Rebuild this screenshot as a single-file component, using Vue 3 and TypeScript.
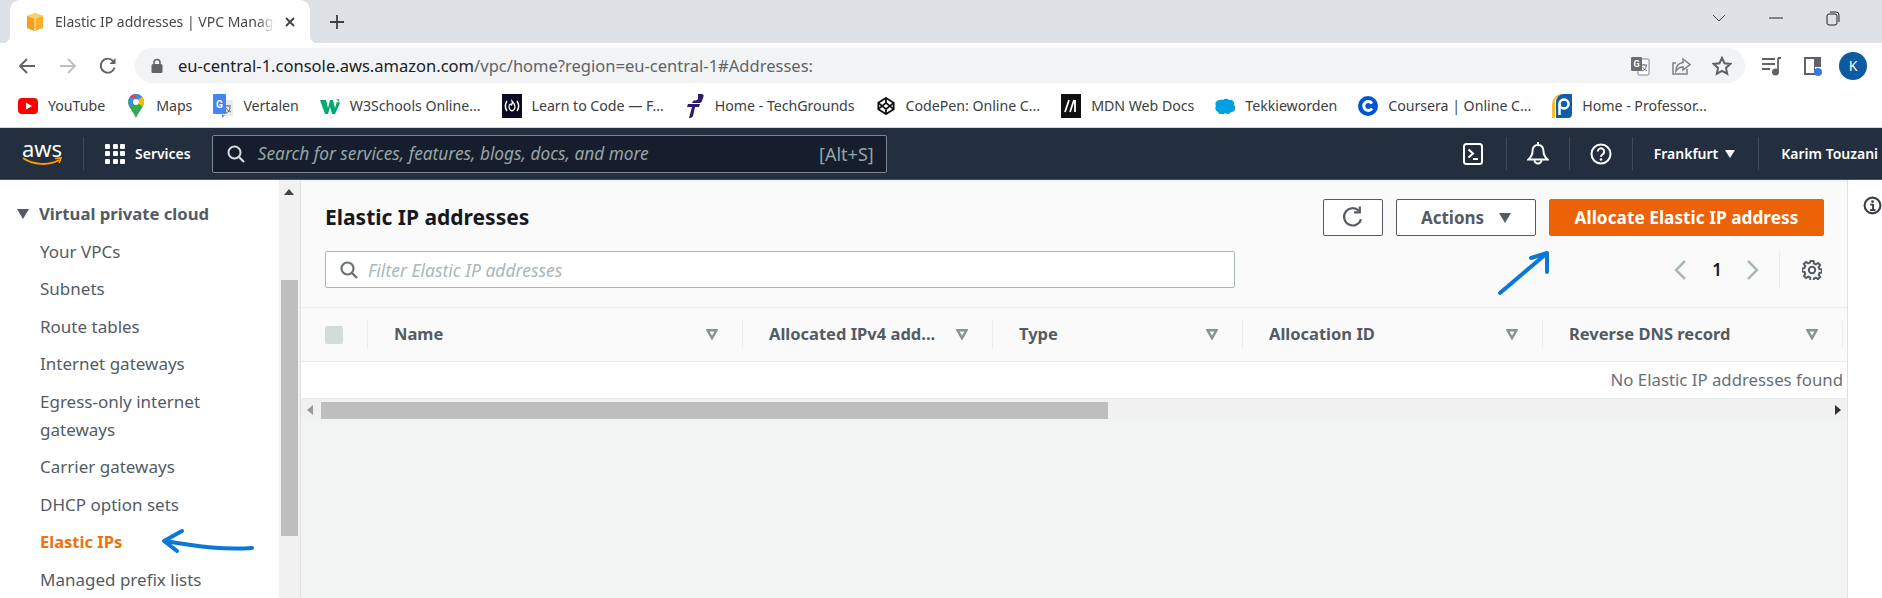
<template>
  <div class="page">
    <!-- browser chrome -->
    <div class="tabstrip">
      <div class="tab">
        <svg class="favicon" viewBox="0 0 18 18" width="18" height="18">
          <polygon points="9,0 17,3 17,15 9,18 1,15 1,3" fill="#f7b02c" />
          <polygon points="1,3 9,6 9,18 1,15" fill="#f59f1e" />
          <polygon points="9,0 17,3 9,6 1,3" fill="#fbd06f" />
          <path d="M9 6v12" stroke="#fde6ae" stroke-width="1" />
        </svg>
        <span class="tab-title">Elastic IP addresses | VPC Management Console</span>
        <svg class="tab-close" viewBox="0 0 12 12" width="12" height="12">
          <path d="M2 2l8 8M10 2l-8 8" stroke="#3c4043" stroke-width="1.8" />
        </svg>
      </div>
      <svg class="tab-plus" viewBox="0 0 16 16" width="16" height="16">
        <path d="M8 1v14M1 8h14" stroke="#3c4043" stroke-width="1.8" />
      </svg>
      <div class="window-btns">
        <svg viewBox="0 0 14 8" width="14" height="8"><path d="M1 1l6 6 6-6" fill="none" stroke="#444" /></svg>
        <svg viewBox="0 0 14 2" width="14" height="2"><path d="M0 1h14" stroke="#222" /></svg>
        <svg viewBox="0 0 14 15" width="14" height="15">
          <rect x="1" y="3" width="10" height="11" rx="2" fill="none" stroke="#222" />
          <path d="M4 1h6a3 3 0 0 1 3 3v7" fill="none" stroke="#222" />
        </svg>
      </div>
    </div>

    <div class="toolbar">
      <svg class="tool back" viewBox="0 0 18 18" width="18" height="18">
        <path d="M17 9H2M9 2L2 9l7 7" fill="none" stroke="#5f6368" stroke-width="1.9" />
      </svg>
      <svg class="tool fwd" viewBox="0 0 18 18" width="18" height="18">
        <path d="M1 9h15M9 2l7 7-7 7" fill="none" stroke="#bcc0c4" stroke-width="1.9" />
      </svg>
      <svg class="tool reload" viewBox="0 0 18 18" width="18" height="18">
        <path d="M15.5 10.5A7 7 0 1 1 14 4" fill="none" stroke="#5f6368" stroke-width="1.9" />
        <path d="M16.5 1v6h-6z" fill="#5f6368" />
      </svg>
      <div class="omnibox">
        <svg class="lock" viewBox="0 0 12 15" width="12" height="15">
          <path d="M3 6V4.5a3 3 0 0 1 6 0V6" fill="none" stroke="#5f6368" stroke-width="1.5" />
          <rect x="0.5" y="6" width="11" height="9" rx="1.5" fill="#5f6368" />
        </svg>
        <span class="url"><span class="url-host">eu-central-1.console.aws.amazon.com</span>/vpc/home?region=eu-central-1#Addresses:</span>
        <svg class="omni-icon first" viewBox="0 0 20 20" width="20" height="20">
          <rect x="8" y="3" width="11" height="16" rx="1" fill="#fff" stroke="#80868b" />
          <rect x="1" y="1" width="11" height="14" rx="1" fill="#6a6e73" />
          <text x="6.5" y="11" class="g-letter">G</text>
          <path d="M11 9h6M14 8v1M12 15c3-1 4-3 4.500-6M12.500 11c1 2 3 3 4.500 3.500" fill="none" stroke="#5f6368" />
        </svg>
        <svg class="omni-icon" viewBox="0 0 20 20" width="20" height="20">
          <path d="M5 7H2v11h14v-5" fill="none" stroke="#7d8185" stroke-width="1.5" />
          <path d="M12 3l7 5.500-7 5.500v-3c-3 0-5 1-7 4 0-5 3-8 7-8.500z" fill="none" stroke="#7d8185" stroke-width="1.5" />
        </svg>
        <svg class="omni-icon" viewBox="0 0 20 20" width="20" height="20">
          <path d="M10 1.800l2.500 5.400 5.800.7-4.300 4 1.200 5.800L10 14.800l-5.200 2.900L6 11.900l-4.300-4 5.800-.7z" fill="none" stroke="#5f6368" stroke-width="2" />
        </svg>
      </div>
      <svg class="ext media" viewBox="0 0 20 20" width="20" height="20">
        <path d="M0 3h13M0 8h13M0 13h8" stroke="#5f6368" stroke-width="1.8" />
        <path d="M16 2h3M16 2v14" stroke="#5f6368" stroke-width="1.800" />
        <circle cx="13.500" cy="16" r="3.500" fill="#5f6368" />
      </svg>
      <svg class="ext panel" viewBox="0 0 20 20" width="20" height="20">
        <path d="M1 1h17v10h-6v8H1z" fill="#5f6368" />
        <rect x="3" y="3" width="8" height="14" fill="#fff" />
        <circle cx="15" cy="16" r="4" fill="#3b78e7" />
      </svg>
      <div class="avatar">K</div>
    </div>

    <div class="bookmarks">
      <div v-for="b in bookmarks" :key="b.label" class="bookmark">
        <span class="bm-icon" v-html="b.icon"></span>
        <span>{{ b.label }}</span>
      </div>
    </div>

    <!-- aws top nav -->
    <header class="nav">
      <div class="aws-logo">
        <span class="aws-word">aws</span>
        <svg viewBox="0 0 40 10" width="40" height="10">
          <path d="M1 1c10 7 26 8 36 2" fill="none" stroke="#ff9900" stroke-width="2" />
          <path d="M33 1.500l6-.5-2 5" fill="none" stroke="#ff9900" stroke-width="1.600" />
        </svg>
      </div>
      <i class="nav-sep first"></i>
      <div class="grid-icon"><i v-for="n in 9" :key="n"></i></div>
      <span class="services">Services</span>
      <div class="nav-search">
        <svg viewBox="0 0 18 18" width="18" height="18">
          <circle cx="7.500" cy="7.500" r="6" fill="none" stroke="#d5dbdb" stroke-width="2" />
          <path d="M12 12l5 5" stroke="#d5dbdb" stroke-width="2.200" />
        </svg>
        <span class="nav-placeholder">Search for services, features, blogs, docs, and more</span>
        <span class="nav-hint">[Alt+S]</span>
      </div>
      <svg class="nav-icon terminal" viewBox="0 0 20 24" width="20" height="24">
        <rect x="1" y="2" width="18" height="20" rx="2.500" fill="none" stroke="#fff" stroke-width="2" />
        <path d="M5.500 7.500L10 11.500l-4.500 4M10 17h5" fill="none" stroke="#fff" stroke-width="2" />
      </svg>
      <i class="nav-sep"></i>
      <svg class="nav-icon" viewBox="0 0 22 24" width="22" height="24">
        <path d="M11 3c-4 0-5.500 3-5.500 6.500 0 4-2 6-4 8h19c-2-2-4-4-4-8C16.500 6 15 3 11 3z" fill="none" stroke="#fff" stroke-width="2" />
        <path d="M11 0v3" stroke="#fff" stroke-width="2" />
        <path d="M7.500 18a3.500 3.500 0 0 0 7 0" fill="none" stroke="#fff" stroke-width="2" />
      </svg>
      <i class="nav-sep"></i>
      <svg class="nav-icon" viewBox="0 0 22 22" width="22" height="22">
        <circle cx="11" cy="11" r="9.500" fill="none" stroke="#fff" stroke-width="2" />
        <path d="M7.800 8.500a3.200 3.200 0 1 1 4.800 2.800c-1 .6-1.600 1.200-1.600 2.500" fill="none" stroke="#fff" stroke-width="2" />
        <circle cx="11" cy="16.500" r="1.300" fill="#fff" />
      </svg>
      <i class="nav-sep"></i>
      <span class="nav-text region">Frankfurt</span>
      <svg class="nav-caret" viewBox="0 0 10 8" width="10" height="8"><path d="M0 0h10L5 8z" fill="#fff" /></svg>
      <i class="nav-sep"></i>
      <span class="nav-text user">Karim Touzani</span>
    </header>

    <div class="body">
      <aside class="sidebar">
        <div class="side-head">
          <svg viewBox="0 0 12 10" width="12" height="10"><path d="M0 0h12L6 10z" fill="#545b64" /></svg>
          <span>Virtual private cloud</span>
        </div>
        <a
          v-for="item in sideItems"
          :key="item"
          class="side-item"
          :class="{ active: item === 'Elastic IPs' }"
        >{{ item }}</a>
      </aside>
      <div class="side-scroll">
        <svg class="up" viewBox="0 0 10 6" width="10" height="6"><path d="M0 6h10L5 0z" fill="#444" /></svg>
        <div class="side-thumb"></div>
      </div>

      <main class="main">
        <section class="panel-head">
          <div class="head-row">
            <h1>Elastic IP addresses</h1>
            <button class="btn icon-btn">
              <svg viewBox="0 0 20 20" width="23" height="23">
                <path d="M16.500 11.500A7.500 7.500 0 1 1 14.500 4" fill="none" stroke="#545b64" stroke-width="1.900" />
                <path d="M15.500 0.500v5h-5" fill="none" stroke="#545b64" stroke-width="1.900" />
              </svg>
            </button>
            <button class="btn actions">
              Actions
              <svg viewBox="0 0 12 10" width="12" height="10"><path d="M0 0h12L6 10z" fill="#545b64" /></svg>
            </button>
            <button class="btn primary">Allocate Elastic IP address</button>
          </div>
          <div class="filter-row">
            <div class="filter">
              <svg viewBox="0 0 18 18" width="18" height="18">
                <circle cx="7.500" cy="7.500" r="6" fill="none" stroke="#687078" stroke-width="2.200" />
                <path d="M12 12l5 5" stroke="#687078" stroke-width="2.400" />
              </svg>
              <span>Filter Elastic IP addresses</span>
            </div>
            <div class="pager">
              <svg viewBox="0 0 12 20" width="12" height="20"><path d="M11 1L2 10l9 9" fill="none" stroke="#aab7b8" stroke-width="2.500" /></svg>
              <span class="page-no">1</span>
              <svg viewBox="0 0 12 20" width="12" height="20"><path d="M1 1l9 9-9 9" fill="none" stroke="#aab7b8" stroke-width="2.500" /></svg>
              <i class="pager-sep"></i>
              <svg class="gear" viewBox="0 0 20 20" width="20" height="20">
                <path d="M8.500 1h3l.5 2.500 1.800.8 2.200-1.400 2.100 2.100-1.400 2.200.8 1.800 2.500.5v3l-2.500.5-.8 1.800 1.400 2.200-2.100 2.100-2.200-1.400-1.800.8-.5 2.500h-3L8 17.500l-1.800-.8L4 18.100 1.900 16l1.400-2.200-.8-1.800L0 11.500v-3l2.500-.5.8-1.800L1.900 4 4 1.900l2.200 1.400L8 2.500z" fill="none" stroke="#545b64" stroke-width="2" />
                <circle cx="10" cy="10" r="3.200" fill="none" stroke="#545b64" stroke-width="2" />
              </svg>
            </div>
          </div>
        </section>

        <div class="table-head">
          <div class="cell check"><span class="checkbox"></span></div>
          <div v-for="c in columns" :key="c" class="cell">
            <span class="col-label">{{ c }}</span>
            <svg viewBox="0 0 12 11" width="12" height="11">
              <path d="M1.500 1.200h9L6 9.200z" fill="none" stroke="#879596" stroke-width="2.400" />
            </svg>
          </div>
        </div>
        <div class="empty-row">No Elastic IP addresses found</div>
        <div class="h-scroll">
          <svg class="arrow-l" viewBox="0 0 6 10" width="6" height="10"><path d="M6 0v10L0 5z" fill="#999" /></svg>
          <div class="h-thumb"></div>
          <svg class="arrow-r" viewBox="0 0 6 10" width="6" height="10"><path d="M0 0v10l6-5z" fill="#333" /></svg>
        </div>
      </main>

      <div class="help-rail">
        <svg viewBox="0 0 18 18" width="19" height="19">
          <circle cx="9" cy="9" r="7.500" fill="none" stroke="#3a4048" stroke-width="2" />
          <circle cx="9" cy="5.300" r="1.300" fill="#3a4048" />
          <path d="M6.800 8.200H9.500V13M6.800 13.200h5" fill="none" stroke="#3a4048" stroke-width="1.800" />
        </svg>
      </div>
    </div>

    <!-- hand drawn arrows on top of the screenshot -->
    <svg class="marks" viewBox="0 0 1882 598" width="1882" height="598">
      <path d="M252 548C225 550 200 547 165 541M182 531L164 541L177 551" />
      <path d="M1500 293L1546 254M1531 258L1547 253L1547 272" />
    </svg>
  </div>
</template>

<script setup lang="ts">
interface Bookmark {
  label: string
  icon: string
}

const bookmarks: Bookmark[] = [
  {
    label: 'YouTube',
    icon: '<svg viewBox="0 0 20 16" width="20" height="16"><rect width="20" height="16" rx="4" fill="#f00"/><path d="M8 4.500v7l6-3.500z" fill="#fff"/></svg>',
  },
  {
    label: 'Maps',
    icon: '<svg viewBox="0 0 16 24" width="16" height="24"><path d="M8 0a8 8 0 0 1 8 8c0 5-5 9-8 16C5 17 0 13 0 8a8 8 0 0 1 8-8z" fill="#34a853"/><path d="M8 0a8 8 0 0 1 6 2.700L2 12.500A8 8 0 0 1 8 0z" fill="#4285f4"/><path d="M14 2.700A8 8 0 0 1 16 8c0 1.500-.6 3-1.500 4.300L8 8z" fill="#fbbc04"/><path d="M2 2.700A8 8 0 0 1 8 0v5z" fill="#ea4335"/><circle cx="8" cy="8" r="3" fill="#fff"/></svg>',
  },
  {
    label: 'Vertalen',
    icon: '<svg viewBox="0 0 20 24" width="20" height="24"><rect x="8" y="6" width="12" height="16" fill="#e8eaed"/><path d="M9 24l3-3H9z" fill="#4285f4"/><path d="M12 12h6M15 11v1M13 19c3-1 4-3 4-6M13 14c1 2 3 3 5 4" stroke="#5f6368" fill="none"/><rect width="13" height="20" rx="1" fill="#4285f4"/><text x="6.500" y="14" font-size="10" font-weight="700" fill="#fff" font-family="Roboto, sans-serif" text-anchor="middle">G</text></svg>',
  },
  {
    label: 'W3Schools Online...',
    icon: '<svg viewBox="0 0 20 16" width="20" height="16"><path d="M0 2h6l2 8 2-8h3l2 8 1.500-5h3.500L15 16h-3L10 9l-2 7H5z" fill="#04aa6d"/><text x="16" y="5" font-size="6" font-weight="700" fill="#04aa6d" font-family="Roboto, sans-serif">3</text></svg>',
  },
  {
    label: 'Learn to Code — F...',
    icon: '<svg viewBox="0 0 20 24" width="20" height="24"><rect width="20" height="24" fill="#0a0a23"/><path d="M5 7c-2 3-2 7 0 10M15 7c2 3 2 7 0 10" fill="none" stroke="#fff" stroke-width="1.500"/><path d="M10 7c2 2 3 4 3 6 0 2-1 3-3 4-2-1-3-2-3-4 0-2 1-3 2-3 0 2 2 1 1-3z" fill="none" stroke="#fff" stroke-width="1.200"/></svg>',
  },
  {
    label: 'Home - TechGrounds',
    icon: '<svg viewBox="0 0 18 24" width="18" height="24"><path d="M12 0h4c1 0 2 1 1.500 2.500L16 7c-1 2-2 2-4 2H6l1-2c1-1 4 0 5-2z" fill="#2e1a6b"/><path d="M2 10h12l-1 3H9l-2 9c-1 2-3 2-4 2l3-11H1z" fill="#2e1a6b"/></svg>',
  },
  {
    label: 'CodePen: Online C...',
    icon: '<svg viewBox="0 0 20 20" width="18" height="18"><path d="M10 1l8.500 5.500v7L10 19l-8.500-5.500v-7z" fill="none" stroke="#111" stroke-width="2"/><path d="M10 1v5.500M10 13.500V19M1.500 6.500L10 13.500l8.500-7M1.500 13.500L10 6.500l8.500 7" fill="none" stroke="#111" stroke-width="2"/></svg>',
  },
  {
    label: 'MDN Web Docs',
    icon: '<svg viewBox="0 0 20 24" width="20" height="24"><rect width="20" height="24" fill="#111"/><path d="M4 18L8 6M9 18l4-12M14 6v12" stroke="#fff" stroke-width="1.800" fill="none"/></svg>',
  },
  {
    label: 'Tekkieworden',
    icon: '<svg viewBox="0 0 20 16" width="20" height="16"><path d="M8 2a4 4 0 0 1 6 0 4 4 0 0 1 5 5 4 4 0 0 1-3 7 4 4 0 0 1-6 1 4 4 0 0 1-7-1 4 4 0 0 1-2-6 4 4 0 0 1 4-6 3 3 0 0 1 3 0z" fill="#00a1e0"/></svg>',
  },
  {
    label: 'Coursera | Online C...',
    icon: '<svg viewBox="0 0 20 20" width="20" height="20"><circle cx="10" cy="10" r="10" fill="#0056d2"/><path d="M14 7.500a4.500 4.500 0 1 0 0 5" fill="none" stroke="#fff" stroke-width="3"/></svg>',
  },
  {
    label: 'Home - Professor...',
    icon: '<svg viewBox="0 0 20 24" width="20" height="24"><path d="M0 10a10 10 0 0 1 10-10h2v2H8c-3 0-5 3-5 7v15H0z" fill="#fbbc2c"/><path d="M4 8a8 8 0 0 1 8-8h8v20a4 4 0 0 1-4 4H4z" fill="#0f5ea8"/><circle cx="12" cy="10" r="4.500" fill="none" stroke="#fff" stroke-width="2.500"/><path d="M7.500 10v11" stroke="#fff" stroke-width="2.500"/></svg>',
  },
]

const sideItems: string[] = [
  'Your VPCs',
  'Subnets',
  'Route tables',
  'Internet gateways',
  'Egress-only internet gateways',
  'Carrier gateways',
  'DHCP option sets',
  'Elastic IPs',
  'Managed prefix lists',
]

const columns: string[] = [
  'Name',
  'Allocated IPv4 add...',
  'Type',
  'Allocation ID',
  'Reverse DNS record',
]
</script>

<style scoped>
.page {
  position: relative;
  width: 1882px;
  height: 598px;
  overflow: hidden;
  display: flex;
  flex-direction: column;
  background: #fff;
  font-family: "Noto Sans", "Open Sans", sans-serif;
}

/* tab strip */
.tabstrip {
  height: 43px;
  flex: none;
  display: flex;
  align-items: flex-end;
  background: #dee1e6;
  padding-left: 10px;
}
.tab {
  position: relative;
  width: 300px;
  height: 43px;
  display: flex;
  align-items: center;
  background: #fff;
  border-radius: 10px 10px 0 0;
  padding-left: 16px;
  box-sizing: border-box;
}
.tab::before,
.tab::after {
  content: "";
  position: absolute;
  bottom: 0;
  width: 8px;
  height: 8px;
}
.tab::before {
  left: -8px;
  background: radial-gradient(circle at 0 0, transparent 8px, #fff 8.500px);
}
.tab::after {
  right: -8px;
  background: radial-gradient(circle at 100% 0, transparent 8px, #fff 8.500px);
}
.favicon {
  flex: none;
}
.tab-title {
  width: 220px;
  margin-left: 11px;
  overflow: hidden;
  white-space: nowrap;
  font-size: 14px;
  color: #45494d;
  -webkit-mask-image: linear-gradient(90deg, #000 92%, transparent);
  mask-image: linear-gradient(90deg, #000 92%, transparent);
}
.tab-close {
  margin-left: 9px;
}
.tab-plus {
  margin: 0 0 13px 19px;
}
.window-btns {
  margin-left: auto;
  width: 170px;
  height: 36px;
  display: flex;
  align-items: center;
  gap: 43px;
  align-self: flex-start;
}

/* toolbar */
.toolbar {
  height: 37px;
  flex: none;
  display: flex;
  align-items: center;
  padding-top: 4px;
}
.tool {
  flex: none;
}
.back {
  margin-left: 18px;
}
.fwd {
  margin-left: 23px;
}
.reload {
  margin-left: 22px;
}
.omnibox {
  width: 1610px;
  height: 35px;
  margin-left: 18px;
  display: flex;
  align-items: center;
  background: #f1f3f4;
  border-radius: 18px;
  flex: none;
}
.lock {
  margin-left: 16px;
}
.url {
  margin-left: 15px;
  font-size: 16.550px;
  color: #5f6368;
  white-space: nowrap;
}
.url-host {
  color: #202124;
}
.omni-icon {
  margin-left: 21px;
  flex: none;
}
.omni-icon.first {
  margin-left: auto;
}
.omni-icon:last-child {
  margin-right: 13px;
}
.g-letter {
  font: 700 9px Roboto, sans-serif;
  fill: #fff;
  text-anchor: middle;
}
.ext {
  flex: none;
}
.media {
  margin-left: 17px;
}
.panel {
  margin-left: 21px;
}
.avatar {
  width: 28px;
  height: 28px;
  margin-left: 16px;
  border-radius: 50%;
  background: #0b5aa2;
  color: #fff;
  font-size: 14px;
  display: flex;
  align-items: center;
  justify-content: center;
}

/* bookmarks */
.bookmarks {
  height: 43px;
  flex: none;
  display: flex;
  align-items: center;
  gap: 21px;
  padding-left: 18px;
  border-bottom: 1px solid #d3d5d8;
  font-size: 14.200px;
  letter-spacing: -0.030px;
  color: #3c4043;
  white-space: nowrap;
}
.bookmark {
  display: flex;
  align-items: center;
  gap: 10px;
}
.bm-icon {
  width: 20px;
  height: 24px;
  display: flex;
  align-items: center;
  justify-content: center;
}

/* aws nav */
.nav {
  height: 51px;
  flex: none;
  display: flex;
  align-items: center;
  background: #232f3e;
  border-bottom: 1px solid #4b5563;
  color: #fff;
}
.aws-logo {
  width: 40px;
  margin-left: 22px;
  display: flex;
  flex-direction: column;
  align-items: center;
}
.aws-word {
  font-size: 22px;
  line-height: 16px;
  height: 17px;
}
.nav-sep {
  width: 1px;
  height: 33px;
  background: #414b57;
  flex: none;
}
.nav-sep.first {
  margin: 0 21px 0 21px;
}
.grid-icon {
  width: 20px;
  height: 20px;
  display: grid;
  grid-template-columns: repeat(3, 5px);
  grid-template-rows: repeat(3, 5px);
  gap: 2.500px;
}
.grid-icon i {
  background: #fff;
  border-radius: 1px;
}
.services {
  margin-left: 10px;
  font-size: 14px;
  font-weight: 600;
}
.nav-search {
  width: 675px;
  height: 38px;
  margin-left: 21px;
  display: flex;
  align-items: center;
  box-sizing: border-box;
  padding: 0 12px 0 14px;
  background: #161e2d;
  border: 1px solid #7d878f;
  border-radius: 2px;
  flex: none;
}
.nav-placeholder {
  margin-left: 13px;
  font-size: 17.300px;
  font-style: italic;
  color: #95a5a6;
}
.nav-hint {
  margin-left: auto;
  font-size: 18px;
  color: #95a5a6;
}
.nav-icon {
  flex: none;
  margin: 0 20px;
}
.nav-icon.terminal {
  margin: 0 23px 0 576px;
}
.nav-text {
  font-size: 14px;
  font-weight: 600;
  white-space: nowrap;
}
.region {
  margin-left: 21px;
}
.nav-caret {
  margin: 0 23px 0 7px;
  flex: none;
}
.user {
  margin-left: 22px;
}

/* content */
.body {
  flex: 1;
  min-height: 0;
  display: flex;
}
.sidebar {
  width: 279px;
  flex: none;
  overflow: hidden;
  padding: 18px 0 0 17px;
  box-sizing: border-box;
  color: #545b64;
  font-size: 17px;
}
.side-head {
  display: flex;
  align-items: center;
  gap: 10px;
  height: 32px;
  margin-bottom: 3px;
  font-size: 16.700px;
  font-weight: 700;
}
.side-head span {
  margin-bottom: 2px;
}
.side-item {
  display: block;
  margin: 0 30px 0 23px;
  padding: 4.750px 0;
  line-height: 28px;
}
.side-item.active {
  color: #ec7211;
  font-size: 16.500px;
  font-weight: 700;
}
.side-scroll {
  width: 22px;
  flex: none;
  display: flex;
  flex-direction: column;
  align-items: flex-start;
  background: #f1f1f1;
  border-right: 1px solid #dfe1e1;
  box-sizing: border-box;
}
.up {
  margin: 9px 0 0 5px;
}
.side-thumb {
  width: 17px;
  height: 256px;
  margin: 85px 0 0 2px;
  background: #bebebe;
}
.main {
  flex: 1;
  min-width: 0;
  display: flex;
  flex-direction: column;
  background: #f2f3f3;
  border-right: 1px solid #dfe1e1;
}
.panel-head {
  height: 128px;
  flex: none;
  padding: 18px 23px 0 24px;
  box-sizing: border-box;
  background: #fafafa;
  border-top: 1px solid #eaeded;
  border-bottom: 1px solid #eaeded;
}
.head-row {
  display: flex;
  align-items: center;
  height: 37px;
}
h1 {
  margin: 0 auto 2px 0;
  font-size: 21px;
  font-weight: 700;
  color: #16191f;
}
.btn {
  height: 37px;
  box-sizing: border-box;
  border: 1px solid #545b64;
  border-radius: 2px;
  background: #fff;
  color: #545b64;
  font: 700 17px "Noto Sans", sans-serif;
  display: flex;
  align-items: center;
  justify-content: center;
}
.icon-btn {
  width: 60px;
}
.actions {
  width: 140px;
  margin-left: 13px;
  gap: 15px;
}
.primary {
  width: 275px;
  margin-left: 13px;
  background: #ec6207;
  border-color: #ec6207;
  color: #fff;
  font-size: 17.300px;
}
.filter-row {
  display: flex;
  align-items: center;
  margin-top: 15px;
}
.filter {
  width: 910px;
  height: 37px;
  display: flex;
  align-items: center;
  gap: 10px;
  padding-left: 14px;
  box-sizing: border-box;
  background: #fff;
  border: 1px solid #aab7b8;
  border-radius: 2px;
  font-size: 17.500px;
  font-style: italic;
  color: #aab7b8;
}
.pager {
  margin-left: auto;
  display: flex;
  align-items: center;
  height: 37px;
}
.page-no {
  margin: 0 25px 0 26px;
  font-size: 17px;
  font-weight: 600;
  color: #16191f;
}
.pager-sep {
  width: 1px;
  height: 37px;
  background: #eaeded;
  margin: 0 22px 0 20px;
}
.gear {
  margin-right: 2px;
}
.table-head {
  height: 54px;
  flex: none;
  display: grid;
  grid-template-columns: 67px 375px 250px 250px 300px 300px;
  align-items: center;
  background: #fafafa;
  border-bottom: 1px solid #eaeded;
  box-sizing: border-box;
}
.cell {
  height: 27px;
  display: flex;
  align-items: center;
  justify-content: space-between;
  padding: 0 24px 0 26px;
  border-right: 1px solid #eaeded;
  box-sizing: border-box;
  min-width: 0;
}
.cell.check {
  padding: 0 0 0 24px;
}
.checkbox {
  width: 18px;
  height: 18px;
  background: #d5dbdb;
  border-radius: 2px;
}
.col-label {
  margin-bottom: 2px;
  font-size: 16.500px;
  font-weight: 700;
  color: #545b64;
  white-space: nowrap;
}
.empty-row {
  height: 37px;
  flex: none;
  padding-right: 4px;
  background: #fff;
  border-bottom: 1px solid #eaeded;
  box-sizing: border-box;
  text-align: right;
  font-size: 16.800px;
  line-height: 36px;
  color: #687078;
}
.h-scroll {
  height: 20px;
  flex: none;
  display: flex;
  align-items: flex-end;
  position: relative;
  background: #f1f1f1;
}
.arrow-l {
  margin: 0 0 4px 6px;
}
.h-thumb {
  width: 787px;
  height: 17px;
  margin-left: 8px;
  background: #bebebe;
}
.arrow-r {
  margin: 0 6px 4px auto;
}
.help-rail {
  width: 34px;
  flex: none;
  display: flex;
  justify-content: flex-end;
  padding: 16px 0 0;
  box-sizing: border-box;
}
.marks {
  position: absolute;
  left: 0;
  top: 0;
  pointer-events: none;
}
.marks path {
  fill: none;
  stroke: #0a78d4;
  stroke-width: 4;
  stroke-linecap: round;
  stroke-linejoin: round;
}
</style>
